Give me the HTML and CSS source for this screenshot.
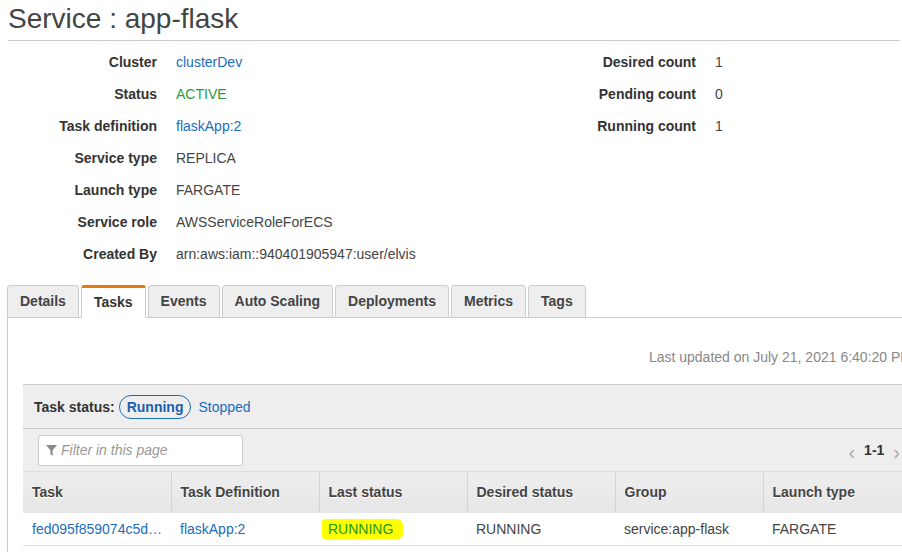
FILE: index.html
```html
<!DOCTYPE html>
<html>
<head>
<meta charset="utf-8">
<title>Service : app-flask</title>
<link rel="stylesheet" href="styles.css">
</head>
<body>
<div class="header">
  <h1 class="title">Service : app-flask</h1>
</div>

<div class="summary">
  <div class="summary-col left">
    <div class="row"><div class="label">Cluster</div><div class="value"><a class="link">clusterDev</a></div></div>
    <div class="row"><div class="label">Status</div><div class="value green">ACTIVE</div></div>
    <div class="row"><div class="label">Task definition</div><div class="value"><a class="link">flaskApp:2</a></div></div>
    <div class="row"><div class="label">Service type</div><div class="value">REPLICA</div></div>
    <div class="row"><div class="label">Launch type</div><div class="value">FARGATE</div></div>
    <div class="row"><div class="label">Service role</div><div class="value">AWSServiceRoleForECS</div></div>
    <div class="row"><div class="label">Created By</div><div class="value">arn:aws:iam::940401905947:user/elvis</div></div>
  </div>
  <div class="summary-col right">
    <div class="row"><div class="label">Desired count</div><div class="value">1</div></div>
    <div class="row"><div class="label">Pending count</div><div class="value">0</div></div>
    <div class="row"><div class="label">Running count</div><div class="value">1</div></div>
  </div>
</div>

<div class="tabs-area">
  <div class="tabs">
    <div class="tab">Details</div>
    <div class="tab active">Tasks</div>
    <div class="tab">Events</div>
    <div class="tab">Auto Scaling</div>
    <div class="tab">Deployments</div>
    <div class="tab">Metrics</div>
    <div class="tab">Tags</div>
  </div>
  <div class="panel">
    <div class="updated">Last updated on July 21, 2021 6:40:20 PM</div>
    <div class="tasks-box">
      <div class="status-row">
        <span class="status-label">Task status:</span>
        <span class="pill">Running</span>
        <a class="link stopped">Stopped</a>
      </div>
      <div class="filter-row">
        <div class="filter">
          <svg class="funnel" width="11" height="11" viewBox="0 0 11 11"><path d="M0 0H11L6.6 5.2V11L4.4 9.3V5.2Z" fill="#8a8a8a"/></svg>
          <span class="placeholder">Filter in this page</span>
        </div>
        <div class="pager">
          <span class="arrow">&lsaquo;</span>
          <span class="range">1-1</span>
          <span class="arrow">&rsaquo;</span>
        </div>
      </div>
      <table class="grid">
        <thead>
          <tr>
            <th>Task</th>
            <th>Task Definition</th>
            <th>Last status</th>
            <th>Desired status</th>
            <th>Group</th>
            <th>Launch type</th>
          </tr>
        </thead>
        <tbody>
          <tr>
            <td><a class="link">fed095f859074c5d…</a></td>
            <td><a class="link">flaskApp:2</a></td>
            <td><span class="marker">RUNNING</span></td>
            <td>RUNNING</td>
            <td>service:app-flask</td>
            <td>FARGATE</td>
          </tr>
        </tbody>
      </table>
    </div>
  </div>
</div>
</body>
</html>
```

FILE: styles.css
```css
html, body {
  margin: 0;
  padding: 0;
  overflow: hidden;
  background: #fff;
}

body {
  width: 902px;
  height: 553px;
  font-family: "Liberation Sans", Arial, sans-serif;
  font-size: 14px;
  color: #444;
}

.header {
  margin: 0 2px 0 8px;
  border-bottom: 1px solid #ccc;
  height: 40px;
  box-sizing: content-box;
}

.title {
  margin: 0;
  padding-top: 3px;
  font-size: 28px;
  line-height: 32px;
  font-weight: normal;
  color: #444;
}

.summary {
  display: flex;
  margin-top: 5px;
  padding-left: 8px;
}

.summary-col.left {
  width: 539px;
}

.row {
  display: flex;
  align-items: center;
  height: 32px;
}

.label {
  width: 149px;
  text-align: right;
  font-weight: bold;
  color: #333;
}

.value {
  margin-left: 19px;
  color: #444;
}

.link {
  color: #1a6dbd;
  text-decoration: none;
}

.green {
  color: #1f9d3a;
}

.tabs-area {
  margin-top: 15px;
  margin-left: 7px;
  width: 921px;
}

.tabs {
  display: flex;
  gap: 2px;
  border-bottom: 1px solid #ccc;
  height: 32px;
}

.tab {
  box-sizing: border-box;
  height: 33px;
  padding: 0 12px;
  line-height: 30px;
  background: #eee;
  border: 1px solid #ccc;
  border-radius: 3px 3px 0 0;
  font-weight: bold;
  color: #444;
}

.tab.active {
  background: #fff;
  border-top: 3px solid #e47911;
  border-bottom-color: #fff;
  line-height: 28px;
  color: #333;
}

.panel {
  border-left: 1px solid #ccc;
  padding: 0 16px 6px 15px;
}

.updated {
  padding-top: 28px;
  line-height: 22px;
  margin-bottom: 16px;
  text-align: right;
  color: #888;
}

.tasks-box {
  background: #eee;
  border-top: 1px solid #ccc;
}

.status-row {
  display: flex;
  align-items: center;
  height: 43px;
  padding-left: 11px;
  border-bottom: 1px solid #ccc;
}

.status-label {
  font-weight: bold;
  color: #333;
}

.pill {
  margin-left: 4px;
  height: 22px;
  line-height: 22px;
  padding: 0 7px;
  border: 1px solid #1a6dbd;
  border-radius: 12px;
  font-weight: bold;
  color: #1a5fae;
}

.stopped {
  margin-left: 7px;
}

.filter-row {
  display: flex;
  align-items: center;
  justify-content: space-between;
  height: 42px;
  padding: 0 12px 0 15px;
}

.filter {
  box-sizing: border-box;
  width: 205px;
  height: 31px;
  background: #fff;
  border: 1px solid #ccc;
  border-radius: 3px;
  display: flex;
  align-items: center;
  padding-left: 7px;
}

.funnel {
  margin-right: 4px;
  margin-top: 1px;
}

.placeholder {
  font-style: italic;
  color: #999;
}

.pager {
  display: flex;
  align-items: center;
  gap: 9px;
}

.arrow {
  color: #aaa;
  font-size: 20px;
  line-height: 20px;
  margin-top: 3px;
}

.range {
  font-weight: bold;
  color: #333;
}

.grid {
  width: 888px;
  table-layout: fixed;
  border-collapse: collapse;
  background: #fff;
}

.grid th {
  height: 41px;
  box-sizing: border-box;
  padding: 0 0 0 9px;
  text-align: left;
  font-weight: bold;
  color: #444;
  text-shadow: 0 1px 0 #fff;
  background: linear-gradient(#eeeeee, #e6e6e6);
  border-top: 1px solid #ddd;
  border-left: 1px solid #d3d3d3;
}

.grid th:first-child {
  border-left: none;
}

.grid td {
  height: 33px;
  box-sizing: border-box;
  padding: 0 0 0 9px;
  white-space: nowrap;
  overflow: hidden;
  border-bottom: 1px solid #ddd;
  color: #444;
}

.marker {
  display: inline-block;
  margin-left: -6px;
  padding: 2px 10px 2px 6px;
  background: #ffff00;
  border-radius: 3px 6px 5px 3px;
  color: #1a9a1a;
}
```
